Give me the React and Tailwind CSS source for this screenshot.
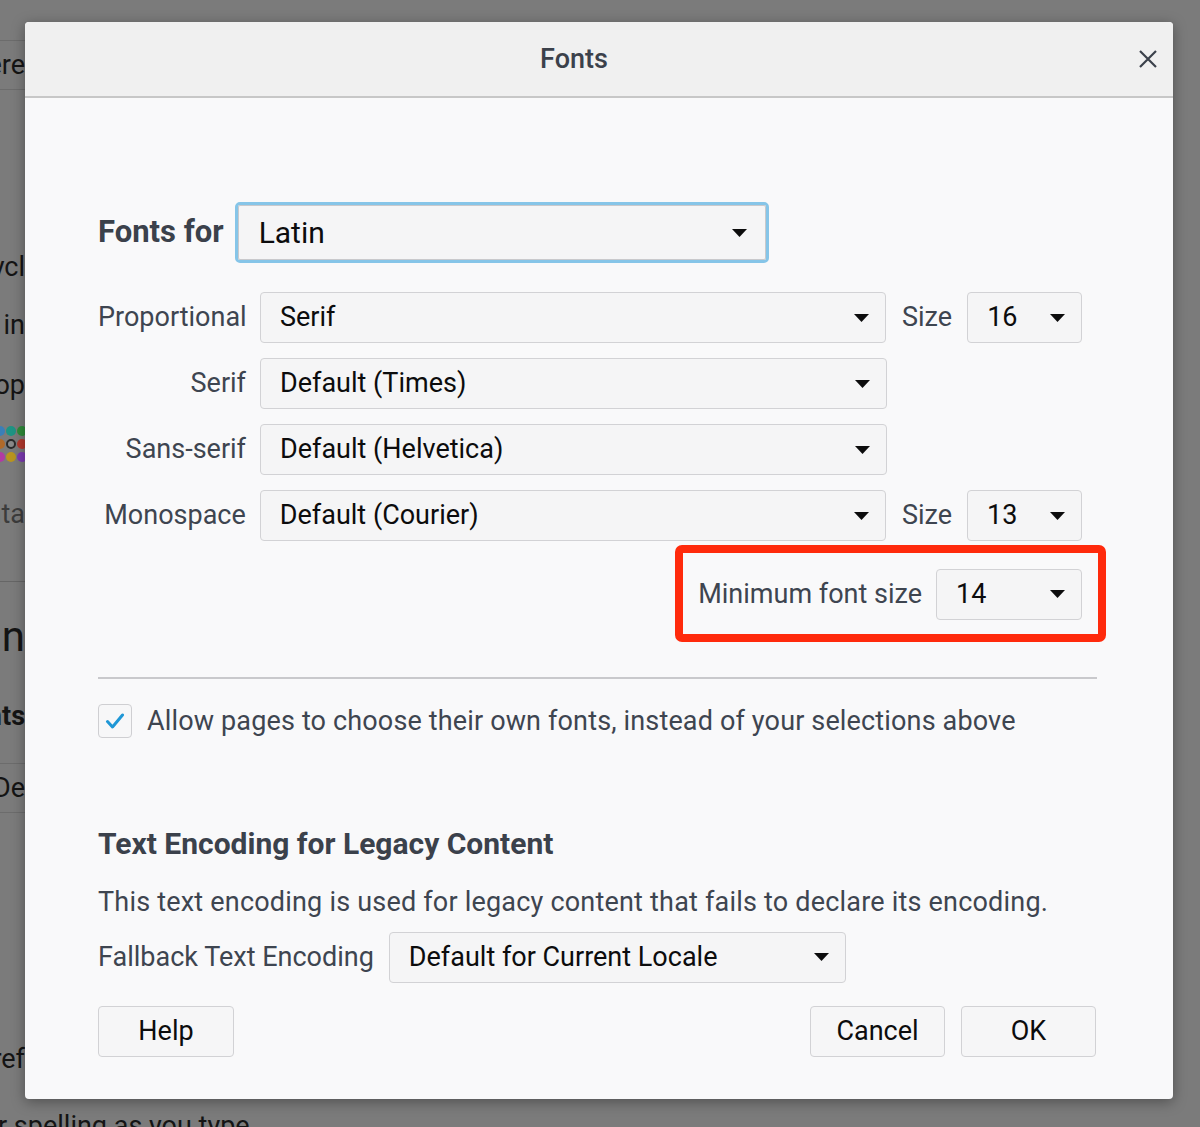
import React from 'react';

const font = { fontFamily: 'Roboto, "Liberation Sans", sans-serif' };

const Arrow = () => (
  <svg width="15" height="8" viewBox="0 0 15 8" className="shrink-0">
    <path d="M0 0h15L7.5 8z" fill="#0c0c0d" />
  </svg>
);

const Select = ({ text, className = '' }) => (
  <div className={`h-[51px] flex items-center justify-between pl-[19px] pr-[16px] bg-[#f5f5f6] border border-[#d2d2d5] rounded-[4px] text-[27px] text-[#0c0c0d] ${className}`}>
    <span className="whitespace-nowrap">{text}</span>
    <Arrow />
  </div>
);

const Button = ({ children, className = '' }) => (
  <div className={`h-[51px] flex items-center justify-center bg-[#f6f6f7] border border-[#d2d2d5] rounded-[4px] text-[27px] text-[#0c0c0d] ${className}`}>
    {children}
  </div>
);

// clipped edge of the page behind the dialog
const Edge = ({ children, className = '' }) => (
  <div className={`w-[25px] overflow-hidden flex items-center justify-end whitespace-nowrap ${className}`}>
    {children}
  </div>
);

const Dot = ({ c, ring }) => (
  <span className={`block w-[10px] h-[10px] rounded-full shrink-0 ${c} ${ring ? 'border-2 border-[#2a2a2a]' : ''}`} />
);

const FontRow = ({ label, value, size }) => (
  <div className="flex items-center h-[51px]">
    <div className="w-[148px] text-right whitespace-nowrap">{label}</div>
    <Select text={value} className="ml-[14px] w-[627px]" />
    {size && (
      <>
        <span className="ml-[16px]">Size</span>
        <Select text={size} className="ml-[15px] w-[115px]" />
      </>
    )}
  </div>
);

export default function App() {
  return (
    <div className="relative w-[1200px] h-[1127px] overflow-hidden bg-[#7b7b7b] text-[27px] text-[#141414]" style={font}>
      {/* page behind the modal */}
      <div className="flex flex-col">
        <Edge className="mt-[40px] h-[50px] border-y border-[#6c6c6c]">Prefere</Edge>
        <Edge className="mt-[161px] h-[32px]">Recycl</Edge>
        <Edge className="mt-[26px] h-[32px]">Open in</Edge>
        <Edge className="mt-[28px] h-[32px]">Stop</Edge>
        <div className="mt-[25px] h-[36px] w-[25px] overflow-hidden flex flex-col justify-between">
          <div className="flex gap-[1px] -ml-[5px]"><Dot c="bg-[#3a7fb8]" /><Dot c="bg-[#1e9484]" /><Dot c="bg-[#2f8d3a]" /></div>
          <div className="flex gap-[1px] -ml-[5px]"><Dot c="bg-[#b06a2a]" /><Dot c="bg-[#8a8a8a]" ring /><Dot c="bg-[#b53a2e]" /></div>
          <div className="flex gap-[1px] -ml-[5px]"><Dot c="bg-[#b13aa4]" /><Dot c="bg-[#b9951f]" /><Dot c="bg-[#7e3bb3]" /></div>
        </div>
        <Edge className="mt-[36px] h-[32px] text-[#3c3c3c]">Conta</Edge>
        <div className="mt-[51px] w-[25px] border-t border-[#666]" />
        <Edge className="mt-[29px] h-[50px] text-[42px]">Lan</Edge>
        <Edge className="mt-[39px] h-[32px] font-bold">Fonts</Edge>
        <Edge className="mt-[31px] h-[50px] border-y border-[#6c6c6c]">De</Edge>
        <Edge className="mt-[230px] h-[32px]">Pref</Edge>
        <div className="mt-[31px] whitespace-nowrap -ml-[2px]">r spelling as you type</div>
      </div>

      {/* dialog */}
      <div className="absolute left-[25px] top-[22px] w-[1148px] h-[1077px] bg-[#f9f9fa] rounded-[4px] shadow-[0_3px_14px_rgba(0,0,0,0.35)] flex flex-col text-[#3e4550]">
        <div className="h-[76px] shrink-0 bg-[#f0f0f0] border-b-2 border-[#c7c7c7] rounded-t-[4px] relative flex items-center justify-center pr-[50px]">
          <span className="text-[27px] font-medium text-[#3b414b]">Fonts</span>
          <svg className="absolute right-[16px] top-[28px]" width="18" height="18" viewBox="0 0 18 18">
            <path d="M1 1l16 16M17 1L1 17" stroke="#3b414b" strokeWidth="2.2" />
          </svg>
        </div>

        <div className="pl-[73px] pr-[76px] flex flex-col">
          <div className="mt-[104px] flex items-center">
            <span className="text-[31px] font-bold text-[#3b414b]">Fonts for</span>
            <div className="ml-[11px] w-[534px] h-[61px] border-[3px] border-[#86c5e8] rounded-[5px]">
              <div className="h-full flex items-center justify-between pl-[20px] pr-[18px] bg-[#f5f5f6] border border-[#c9c9cc] rounded-[2px] text-[30px] text-[#0c0c0d]">
                <span>Latin</span>
                <Arrow />
              </div>
            </div>
          </div>

          <div className="mt-[29px] flex flex-col gap-[15px] w-[984px]">
            <FontRow label="Proportional" value="Serif" size="16" />
            <FontRow label="Serif" value="Default (Times)" />
            <FontRow label="Sans-serif" value="Default (Helvetica)" />
            <FontRow label="Monospace" value="Default (Courier)" size="13" />
          </div>

          <div className="w-[984px] flex justify-end">
            <div className="mt-[4px] -mr-[24px] h-[97px] border-[8px] border-[#ff2a0c] rounded-[7px] flex items-center pl-[15px] pr-[16px] pt-[1px]">
              <span className="whitespace-nowrap">Minimum font size</span>
              <Select text="14" className="ml-[14px] w-[146px]" />
            </div>
          </div>

          <div className="mt-[35px] h-[2px] bg-[#c9c9cc]" />

          <div className="mt-[22px] flex items-center">
            <div className="w-[34px] h-[34px] bg-[#f7f7f8] border border-[#cfcfd2] rounded-[4px] flex items-center justify-center">
              <svg width="20" height="16" viewBox="0 0 20 16">
                <path d="M2.5 8.5l5 5.5L17.5 2" fill="none" stroke="#1f97d6" strokeWidth="3" strokeLinecap="round" strokeLinejoin="round" />
              </svg>
            </div>
            <span className="ml-[15px] whitespace-nowrap tracking-[0.15px]">Allow pages to choose their own fonts, instead of your selections above</span>
          </div>

          <div className="mt-[84px] text-[30px] font-bold text-[#3b414b] leading-[36px]">Text Encoding for Legacy Content</div>
          <div className="mt-[24px] leading-[32px] whitespace-nowrap tracking-[0.2px]">This text encoding is used for legacy content that fails to declare its encoding.</div>

          <div className="mt-[14px] flex items-center">
            <span className="whitespace-nowrap">Fallback Text Encoding</span>
            <Select text="Default for Current Locale" className="ml-[15px] w-[457px]" />
          </div>

          <div className="mt-[23px] flex items-center">
            <Button className="w-[136px]">Help</Button>
            <Button className="ml-auto w-[135px]">Cancel</Button>
            <Button className="ml-[16px] w-[135px] mr-[1px]">OK</Button>
          </div>
        </div>
      </div>
    </div>
  );
}
